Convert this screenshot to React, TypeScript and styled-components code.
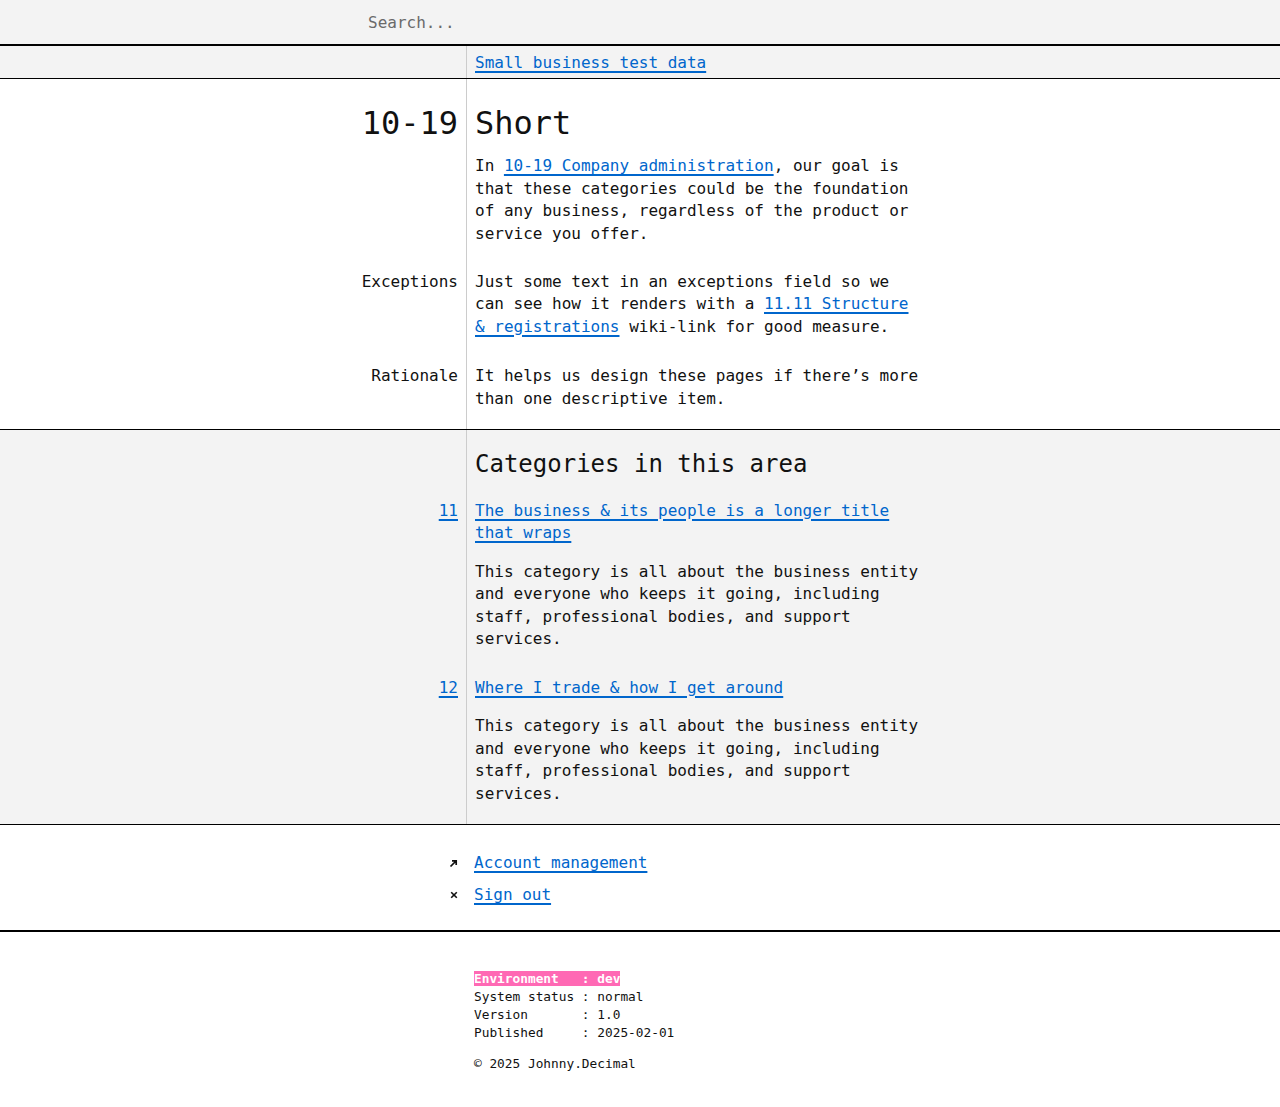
import React from "react";
import styled, { createGlobalStyle } from "styled-components";

const GUTTER = 466;
const RULE = "#cccccc";
const GREY = "#f3f3f3";
const LINK = "#0066cc";

const Global = createGlobalStyle`
  html, body {
    margin: 0;
    padding: 0;
    background: #fff;
  }
  body {
    font-family: "DejaVu Sans Mono", "Liberation Mono", monospace;
    font-size: 16px;
    line-height: 1.4;
    color: #111;
  }
  * {
    box-sizing: border-box;
  }
`;

const SearchBar = styled.header`
  background: ${GREY};
  border-bottom: 2px solid #000;
  padding: 2px 0 0 360px;
  height: 46px;
  display: flex;
  align-items: center;
`;

const SearchInput = styled.input`
  font: inherit;
  font-size: 16px;
  border: 0;
  outline: 0;
  background: transparent;
  padding: 0 8px;
  width: 400px;
  color: #111;
  &::placeholder {
    color: #6a6a6a;
  }
`;

/* a two column band, the column rule is painted as a 1px stripe */
const Band = styled.section<{ $grey?: boolean; $rule?: boolean; $border?: string; $pt?: number; $pb?: number }>`
  display: grid;
  grid-template-columns: ${GUTTER}px minmax(0, 1fr);
  align-items: start;
  padding: ${(p) => p.$pt ?? 0}px 0 ${(p) => p.$pb ?? 0}px;
  border-bottom: ${(p) => p.$border ?? "1px solid #000"};
  background-color: ${(p) => (p.$grey ? GREY : "#fff")};
  background-image: ${(p) =>
    p.$rule
      ? `linear-gradient(to right, transparent ${GUTTER}px, ${RULE} ${GUTTER}px, ${RULE} ${GUTTER + 1}px, transparent ${GUTTER + 1}px)`
      : "none"};
`;

const Label = styled.div<{ $mt?: number; $size?: number }>`
  margin-top: ${(p) => p.$mt ?? 0}px;
  padding-right: 8px;
  text-align: right;
  font-size: ${(p) => p.$size ?? 16}px;
  line-height: ${(p) => (p.$size ? 1.2 : 1.4)};
`;

const Cell = styled.div<{ $mt?: number; $pad?: number }>`
  margin-top: ${(p) => p.$mt ?? 0}px;
  padding-left: ${(p) => p.$pad ?? 9}px;
  max-width: ${(p) => (p.$pad ?? 9) + 448}px;
`;

const Crumb = styled.div`
  padding: 6px 0 4px 9px;
  line-height: 22px;
`;

const Title = styled.h1<{ $size: number }>`
  margin: 0;
  font-weight: normal;
  font-size: ${(p) => p.$size}px;
  line-height: 1.2;
`;

const Para = styled.p`
  margin: 0;
`;

const A = styled.a`
  color: ${LINK};
  text-decoration: underline;
  text-decoration-thickness: 1.5px;
  text-underline-offset: 3px;
`;

const NavIcon = styled.div<{ $mt?: number }>`
  margin-top: ${(p) => p.$mt ?? 0}px;
  padding-right: 8px;
  height: 22.4px;
  display: flex;
  align-items: center;
  justify-content: flex-end;
`;

const Footer = styled.footer`
  padding: 38px 0 35px 474px;
  font-size: 12.8px;
  line-height: 1.4;
`;

const Status = styled.pre`
  margin: 0;
  font: inherit;
`;

const Env = styled.span`
  background: #ff69b4;
  color: #fff;
  font-weight: bold;
`;

const Copy = styled.div`
  margin-top: 13px;
`;

const ArrowIcon = () => (
  <svg width="9" height="9" viewBox="0 0 9 9">
    <path d="M1.5 7.5 L7 2 M3 1.8 H7.2 V6" fill="none" stroke="#111" strokeWidth="1.7" />
  </svg>
);

const CrossIcon = () => (
  <svg width="8" height="8" viewBox="0 0 8 8">
    <path d="M1.2 1.2 L6.8 6.8 M6.8 1.2 L1.2 6.8" fill="none" stroke="#111" strokeWidth="1.6" />
  </svg>
);

const categories = [
  {
    id: "11",
    title: "The business & its people is a longer title that wraps",
    text: "This category is all about the business entity and everyone who keeps it going, including staff, professional bodies, and support services.",
  },
  {
    id: "12",
    title: "Where I trade & how I get around",
    text: "This category is all about the business entity and everyone who keeps it going, including staff, professional bodies, and support services.",
  },
];

export default function App() {
  return (
    <>
      <Global />
      <SearchBar>
        <SearchInput placeholder="Search..." />
      </SearchBar>

      <Band $grey $rule>
        <div />
        <Crumb>
          <A href="#">Small business test data</A>
        </Crumb>
      </Band>

      <Band $rule $pt={25} $pb={19}>
        <Label $size={32}>10-19</Label>
        <Cell>
          <Title $size={32}>Short</Title>
        </Cell>

        <div />
        <Cell $mt={13}>
          <Para>
            In <A href="#">10-19 Company administration</A>, our goal is that these categories could be
            the foundation of any business, regardless of the product or service you offer.
          </Para>
        </Cell>

        <Label $mt={26}>Exceptions</Label>
        <Cell $mt={26}>
          <Para>
            Just some text in an exceptions field so we can see how it renders with a{" "}
            <A href="#">11.11 Structure &amp; registrations</A> wiki-link for good measure.
          </Para>
        </Cell>

        <Label $mt={27}>Rationale</Label>
        <Cell $mt={27}>
          <Para>It helps us design these pages if there’s more than one descriptive item.</Para>
        </Cell>
      </Band>

      <Band $grey $rule $pt={20} $pb={19}>
        <div />
        <Cell>
          <Title as="h2" $size={24}>
            Categories in this area
          </Title>
        </Cell>

        {categories.map((c, i) => (
          <React.Fragment key={c.id}>
            <Label $mt={i === 0 ? 21 : 26}>
              <A href="#">{c.id}</A>
            </Label>
            <Cell $mt={i === 0 ? 21 : 26}>
              <A href="#">{c.title}</A>
            </Cell>
            <div />
            <Cell $mt={16.5}>
              <Para>{c.text}</Para>
            </Cell>
          </React.Fragment>
        ))}
      </Band>

      <Band $pt={27} $pb={24} $border="2px solid #000">
        <NavIcon>
          <ArrowIcon />
        </NavIcon>
        <Cell $pad={8}>
          <A href="#">Account management</A>
        </Cell>
        <NavIcon $mt={9.6}>
          <CrossIcon />
        </NavIcon>
        <Cell $pad={8} $mt={9.6}>
          <A href="#">Sign out</A>
        </Cell>
      </Band>

      <Footer>
        <Status>
          <Env>Environment   : dev</Env>
          {"\nSystem status : normal\nVersion       : 1.0\nPublished     : 2025-02-01"}
        </Status>
        <Copy>© 2025 Johnny.Decimal</Copy>
      </Footer>
    </>
  );
}
